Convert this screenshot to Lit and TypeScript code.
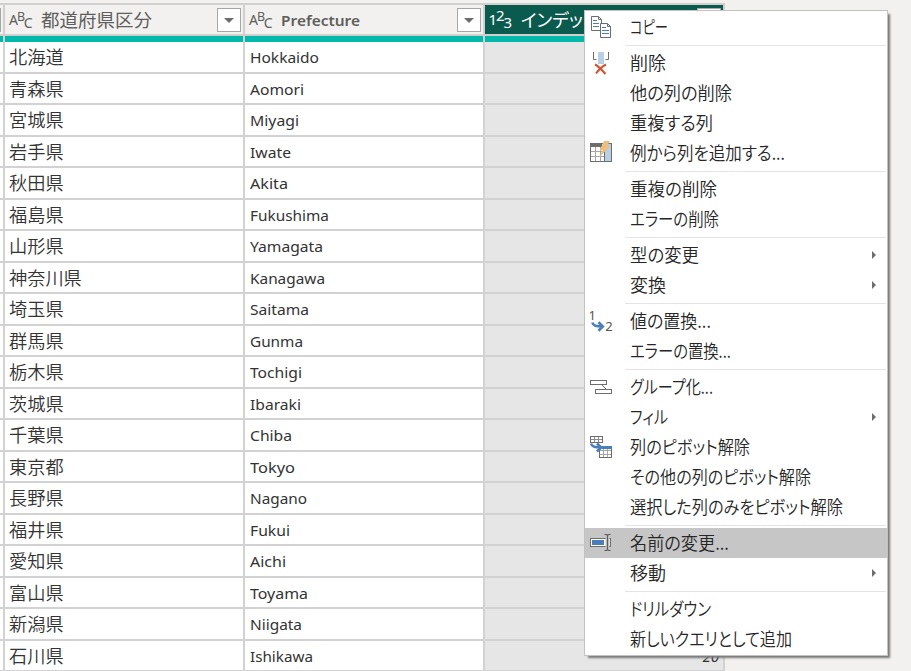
import { LitElement, html, css, svg, nothing } from "lit";
import { customElement, property } from "lit/decorators.js";

const ROWS: [string, string, number, string?][] = [
  ["北海道", "Hokkaido", 69], ["青森県", "Aomori", 54], ["宮城県", "Miyagi", 49],
  ["岩手県", "Iwate", 41], ["秋田県", "Akita", 38], ["福島県", "Fukushima", 79],
  ["山形県", "Yamagata", 73], ["神奈川県", "Kanagawa", 75], ["埼玉県", "Saitama", 59],
  ["群馬県", "Gunma", 53], ["栃木県", "Tochigi", 52], ["茨城県", "Ibaraki", 51],
  ["千葉県", "Chiba", 42], ["東京都", "Tokyo", 45], ["長野県", "Nagano", 57],
  ["福井県", "Fukui", 40], ["愛知県", "Aichi", 36], ["富山県", "Toyama", 58],
  ["新潟県", "Niigata", 52], ["石川県", "Ishikawa", 63, "20"],
];

interface Item { label: string; w: number; icon?: string; sub?: boolean; active?: boolean; }

const GROUPS: Item[][] = [
  [{ label: "コピー", w: 38, icon: "copy" }],
  [
    { label: "削除", w: 36, icon: "remove" },
    { label: "他の列の削除", w: 102 },
    { label: "重複する列", w: 83 },
    { label: "例から列を追加する...", w: 155, icon: "example" },
  ],
  [{ label: "重複の削除", w: 87 }, { label: "エラーの削除", w: 89 }],
  [{ label: "型の変更", w: 69, sub: true }, { label: "変換", w: 36, sub: true }],
  [{ label: "値の置換...", w: 81, icon: "replace" }, { label: "エラーの置換...", w: 101 }],
  [
    { label: "グループ化...", w: 83, icon: "group" },
    { label: "フィル", w: 38, sub: true },
    { label: "列のピボット解除", w: 120, icon: "unpivot" },
    { label: "その他の列のピボット解除", w: 181 },
    { label: "選択した列のみをピボット解除", w: 213 },
  ],
  [
    { label: "名前の変更...", w: 99, icon: "rename", active: true },
    { label: "移動", w: 36, sub: true },
  ],
  [{ label: "ドリルダウン", w: 81 }, { label: "新しいクエリとして追加", w: 162 }],
];

const ICONS: Record<string, unknown> = {
  copy: svg`
    <g fill="#fff" stroke="#6d6d6d">
      <path d="M1.5 1.5h7l3 3v11h-10z"/><path d="M8.500 1.500v3h3" fill="none"/>
      <path d="M3 5.500h4M3 8.500h6M3 11.500h6" stroke="#4a7ebb"/>
      <path d="M10.500 8.500h7l3 3v11h-10z"/><path d="M17.500 8.500v3h3" fill="none"/>
      <path d="M12 12.500h4M12 15.500h7M12 18.500h7" stroke="#4a7ebb"/>
    </g>`,
  remove: svg`
    <rect x="8" y="1" width="6" height="12" fill="#b9cfe6"/>
    <path d="M3.500 1v7.500h3M18.500 1v7.500h-3" fill="none" stroke="#6d6d6d"/>
    <path d="M5 13.500C8 15 12 19 15.500 23M16 13.500C12 15.500 8.500 19 6 22.500" fill="none" stroke="#d35230" stroke-width="2"/>`,
  example: svg`
    <rect x=".5" y="2.500" width="21" height="18" fill="#fff" stroke="#6d6d6d"/>
    <rect x="0" y="2" width="12" height="4" fill="#6d6d6d"/>
    <path d="M1 10.500h13M1 15.500h13M5.500 6v14M10.500 6v14" stroke="#a6a6a6"/>
    <rect x="14.500" y="2.500" width="7" height="18" fill="#b9cfe6" stroke="#6d6d6d"/>
    <path d="M14 0h6l-3 5h3.500L9.500 16l3-7H9.800z" fill="#ecc078"/>`,
  replace: svg`
    <text x="-1.500" y="11" class="num">1</text><text x="15.300" y="22" class="num">2</text>
    <path d="M2.300 13.500c1 3.500 4 4 10 4M8.500 13.300l4.300 4.200-4.300 4.200" fill="none" stroke="#4a7ebb" stroke-width="2.600"/>`,
  group: svg`
    <g fill="#fff" stroke="#6d6d6d"><rect x=".5" y="5.500" width="16" height="4"/>
    <path d="M12 10l4 4"/><rect x="5.500" y="14.500" width="16" height="4"/></g>`,
  unpivot: svg`<g transform="translate(0 1)">
    <rect x=".5" y=".5" width="12" height="6" fill="#fff" stroke="#6d6d6d"/>
    <path d="M1 3.500h11M4.500 1v5M8.500 1v5" stroke="#8c8c8c"/>
    <rect x="9.500" y="10.500" width="12" height="11" fill="#fff" stroke="#6d6d6d"/>
    <path d="M10 14.500h11M10 18.500h11M13.500 13v8M17.500 13v8" stroke="#a6a6a6"/>
    <rect x="12" y="10" width="10" height="3" fill="#4a7ebb"/>
    <path d="M1 7.500c1 3.500 4 4 10 4M7 7.500l4.200 4-4.200 4" fill="none" stroke="#4a7ebb" stroke-width="2.600"/></g>`,
  rename: svg`
    <rect x=".5" y="7.500" width="20" height="8" fill="#fff" stroke="#6d6d6d"/>
    <rect x="2" y="9" width="12" height="5" fill="#4a7ebb"/>
    <path d="M17.500 4v15" stroke="#c6c6c6" stroke-width="4"/>
    <path d="M14.500 3.500h2l1 1 1-1h2M17.500 4.500v14M14.500 19.500h2l1-1 1 1h2" fill="none" stroke="#5c5c5c" stroke-width="1.200"/>`,
};

/** Single line of text, condensed or widened to a given width. */
@customElement("fit-text")
export class FitText extends LitElement {
  @property() text = "";
  @property({ type: Number }) width = 0;

  static styles = css`
    :host { display: block; white-space: nowrap; }
    span { display: inline-block; transform-origin: 0 50%; font-feature-settings: "palt"; }
  `;

  firstUpdated() {
    const el = this.renderRoot.querySelector("span")!;
    if (this.width && el.offsetWidth) {
      el.style.transform = `scaleX(${this.width / el.getBoundingClientRect().width})`;
    }
  }

  render() {
    return html`<span>${this.text}</span>`;
  }
}

@customElement("context-menu")
export class ContextMenu extends LitElement {
  static styles = css`
    :host {
      display: block; box-sizing: border-box; width: 304px; height: 646px;
      padding-top: 1px; background: #fff; border: 1px solid #c3c2c1;
      box-shadow: 3px 3px 2px -1px #777;
      font: 350 18px/28px "Noto Sans CJK JP", sans-serif; color: #262626;
    }
    .group + .group::before {
      content: ""; display: block; height: 1px; margin: 3px 1px 2px 40px; background: #e4e4e4;
    }
    .item { display: flex; height: 30px; align-items: center; }
    .item.active { background: #c6c6c6; }
    .icon { flex: none; width: 40px; height: 24px; padding-left: 5px; box-sizing: border-box; }
    .icon svg { display: block; overflow: visible; }
    .num { font: 13px "Noto Sans", sans-serif; fill: #555; }
    .label { flex: 1; height: 30px; padding-left: 5px; }
    .arrow {
      margin-right: 11px; border: solid transparent; border-width: 4px 0 4px 4px;
      border-left-color: #6d6d6d;
    }
  `;

  render() {
    return GROUPS.map((g) => html`<div class="group">${g.map((i) => html`
      <div class="item ${i.active ? "active" : ""}">
        <div class="icon">${i.icon ? html`<svg width="23" height="24">${ICONS[i.icon]}</svg>` : nothing}</div>
        <fit-text class="label" .text=${i.label} .width=${i.w}></fit-text>
        ${i.sub ? html`<div class="arrow"></div>` : nothing}
      </div>`)}</div>`);
  }
}

@customElement("app-root")
export class AppRoot extends LitElement {
  static styles = css`
    :host {
      display: block; position: relative; width: 911px; height: 671px; overflow: hidden;
      background: #f2f1f0; font-family: "Noto Sans", "Noto Sans CJK JP", sans-serif; color: #333;
    }
    .grid { width: 725px; padding-top: 3px; }
    .head, .row { display: grid; grid-template-columns: 5px repeat(3, 240px); }
    .head { border-top: 2px solid #d2d0ce; height: 37px; }
    .head > div {
      box-sizing: border-box; height: 37px; border-right: 2px solid #d2d0ce;
      background: linear-gradient(#d2d0ce, #d2d0ce) 0 29px / 100% 2px no-repeat,
        linear-gradient(#01b8aa, #01b8aa) 0 31px / 100% 6px no-repeat;
    }
    .hc { display: flex; height: 29px; align-items: center; color: #605e5c; }
    .sel .hc { background: #0b5a4e; color: #fff; }
    .type { flex: none; width: 36px; height: 29px; fill: #605e5c; font-size: 14px; }
    .type .sup { font-size: 12.5px; }
    .sel .type { fill: #fff; }
    .sel .type text { font-size: 15px; }
    .title { flex: 1; font-size: 18px; line-height: 29px; }
    .title.ja { font-family: "Noto Sans CJK JP", sans-serif; }
    .title.en { font: 600 15px/30px "Noto Sans", sans-serif; }
    .btn {
      flex: none; width: 24px; height: 24px; box-sizing: border-box; margin-right: 2px;
      margin-top: 1px; border: 1px solid #a6a6a6; background: #fff;
      display: flex; align-items: center; justify-content: center;
    }
    .btn::after { content: ""; border: solid transparent; border-width: 5px 5px 0; border-top-color: #6b6b6b; }
    .stub { width: 1px; height: 24px; margin-top: 3px; background: #a6a6a6; }
    .row { grid-template-rows: 32px; height: 32px; }
    .row.even { grid-template-rows: 31px; height: 31px; }
    .cell {
      box-sizing: border-box; border: solid #d2d2d2; border-width: 0 2px 2px 0; min-height: 0;
      background: #fff; padding-left: 4.500px; font-size: 15px; line-height: 30px;
    }
    .cell.edge { padding: 0; }
    .cell.ja { font: 350 18px/28px "Noto Sans CJK JP", sans-serif; padding-left: 4px; }
    .cell.num { background: #e6e6e6; text-align: right; font-style: italic; padding-right: 4px; }
    context-menu { position: absolute; left: 584px; top: 10px; }
  `;

  private head(type: "abc" | "123", title: string, w: number, cls: string) {
    const t = type === "abc" ? ["A", "B", "C"] : ["1", "2", "3"];
    const x = type === "abc" ? [4, 12, 18.8] : [3.5, 11, 18.5];
    return html`<div class=${type === "123" ? "sel" : ""}><div class="hc">
      <svg class="type"><text x=${x[0]} y="20">${t[0]}</text><text class="sup" x=${x[1]} y="16">${t[1]}</text><text x=${x[2]} y="23">${t[2]}</text></svg>
      <fit-text class="title ${cls}" .text=${title} .width=${w}></fit-text>
      <div class="btn"></div>
    </div></div>`;
  }

  render() {
    return html`
      <div class="grid">
        <div class="head">
          <div><div class="stub"></div></div>
          ${this.head("abc", "都道府県区分", 111, "ja")}
          ${this.head("abc", "Prefecture", 79, "en")}
          ${this.head("123", "インデックス", 93, "ja")}
        </div>
        ${ROWS.map(([ja, en, w, index], i) => html`<div class="row ${i % 2 ? "even" : ""}">
          <div class="cell edge"></div>
          <div class="cell ja"><fit-text .text=${ja} .width=${ja.length * 18.200}></fit-text></div>
          <div class="cell"><fit-text .text=${en} .width=${w}></fit-text></div>
          <div class="cell num">${index ?? nothing}</div>
        </div>`)}
      </div>
      <context-menu></context-menu>`;
  }
}
